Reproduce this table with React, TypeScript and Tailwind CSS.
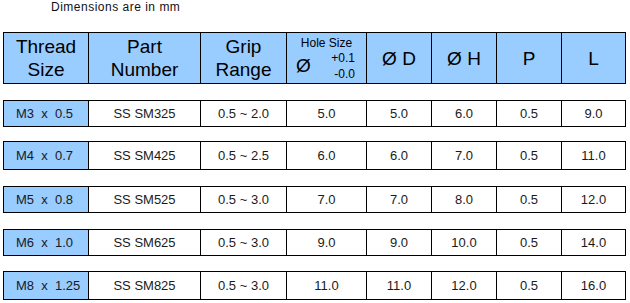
import React from "react";

const cols = ["w-[84px]", "w-[112px]", "w-[86px]", "w-[80px]", "w-[65px]", "w-[65px]", "w-[65px]", "w-[64px]"];

const rows = [
  { d: ["M3  x  0.5", "SS SM325", "0.5 ~ 2.0", "5.0", "5.0", "6.0", "0.5", "9.0"], cls: "mt-[16px] h-[27px]" },
  { d: ["M4  x  0.7", "SS SM425", "0.5 ~ 2.5", "6.0", "6.0", "7.0", "0.5", "11.0"], cls: "mt-[14px] h-[29px]" },
  { d: ["M5  x  0.8", "SS SM525", "0.5 ~ 3.0", "7.0", "7.0", "8.0", "0.5", "12.0"], cls: "mt-[16px] h-[27px]" },
  { d: ["M6  x  1.0", "SS SM625", "0.5 ~ 3.0", "9.0", "9.0", "10.0", "0.5", "14.0"], cls: "mt-[16px] h-[27px]" },
  { d: ["M8  x  1.25", "SS SM825", "0.5 ~ 3.0", "11.0", "11.0", "12.0", "0.5", "16.0"], cls: "mt-[15px] h-[29px]" },
];

export default function App() {
  return (
    <div className="w-[630px] h-[303px] bg-white overflow-hidden" style={{ fontFamily: '"Liberation Sans", Arial, sans-serif' }}>
      <div className="h-[32px] pl-[51px] pt-[1px] text-[12px] leading-[13px] tracking-[0.5px] text-[#111]">Dimensions are in mm</div>
      <div className="ml-[3px] w-[623px] flex flex-col">
        <div className="flex h-[52px] border border-black bg-[#99ccff] text-black text-[19px] leading-[23px]">
          <div className={`${cols[0]} flex flex-col items-center justify-center`}><span>Thread</span><span>Size</span></div>
          <div className={`${cols[1]} border-l border-black flex flex-col items-center justify-center`}><span>Part</span><span>Number</span></div>
          <div className={`${cols[2]} border-l border-black flex flex-col items-center justify-center`}><span>Grip</span><span>Range</span></div>
          <div className={`${cols[3]} border-l border-black flex flex-col`}>
            <div className="text-[12px] leading-[14px] text-center pt-[3px]">Hole Size</div>
            <div className="flex items-start justify-between">
              <span className="pl-[9px] pt-[4px] text-[19px] leading-[23px]">Ø</span>
              <div className="flex flex-col items-end pr-[11px] text-[12px] leading-[16px]">
                <span>+0.1</span>
                <span>-0.0</span>
              </div>
            </div>
          </div>
          <div className={`${cols[4]} border-l border-black flex items-center justify-center`}>Ø D</div>
          <div className={`${cols[5]} border-l border-black flex items-center justify-center`}>Ø H</div>
          <div className={`${cols[6]} border-l border-black flex items-center justify-center`}>P</div>
          <div className={`${cols[7]} border-l border-black flex items-center justify-center`}>L</div>
        </div>
        {rows.map((r, i) => (
          <div key={i} className={`flex border border-black text-[13px] text-[#1a1a1a] ${r.cls}`}>
            {r.d.map((v, j) =>
              j === 0 ? (
                <div key={j} className={`${cols[0]} bg-[#99ccff] flex items-center pl-[12px] whitespace-pre`}>{v}</div>
              ) : (
                <div key={j} className={`${cols[j]} border-l border-black flex items-center justify-center bg-white`}>{v}</div>
              )
            )}
          </div>
        ))}
      </div>
    </div>
  );
}
